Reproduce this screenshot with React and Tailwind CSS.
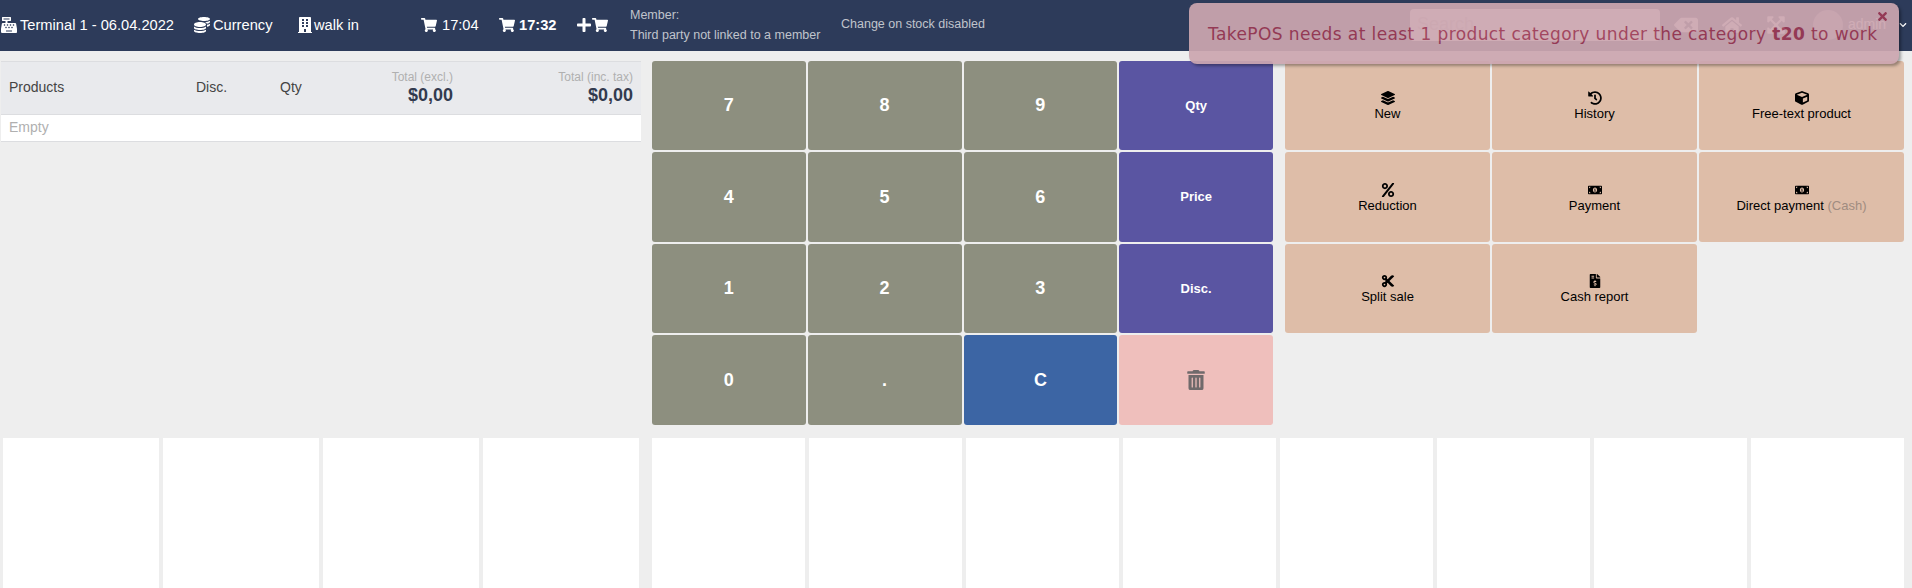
import React from "react";
import {
  FaCashRegister, FaCoins, FaBuilding, FaShoppingCart, FaPlus, FaLayerGroup, FaHistory, FaCube,
  FaPercent, FaMoneyBillAlt, FaCut, FaFileInvoiceDollar, FaTrashAlt, FaBackspace, FaHome,
  FaExpandArrowsAlt, FaTimes, FaChevronDown,
} from "react-icons/fa";

const numpad = [
  ["7", "n"], ["8", "n"], ["9", "n"], ["Qty", "q"],
  ["4", "n"], ["5", "n"], ["6", "n"], ["Price", "q"],
  ["1", "n"], ["2", "n"], ["3", "n"], ["Disc.", "q"],
  ["0", "n"], [".", "n"], ["C", "c"], ["", "d"],
];

const actions = [
  [FaLayerGroup, "New"],
  [FaHistory, "History"],
  [FaCube, "Free-text product"],
  [FaPercent, "Reduction"],
  [FaMoneyBillAlt, "Payment"],
  [FaMoneyBillAlt, "Direct payment", "(Cash)"],
  [FaCut, "Split sale"],
  [FaFileInvoiceDollar, "Cash report"],
];

function NumKey({ label, kind }) {
  if (kind === "d") {
    return (
      <div className="flex items-center justify-center rounded-[3px] bg-[#efbfbc] text-[#706a6b]">
        <FaTrashAlt className="text-[20px]" />
      </div>
    );
  }
  const cls =
    kind === "q"
      ? "bg-[#5a55a2] text-[13px]"
      : kind === "c"
      ? "bg-[#3c65a4] text-[18px]"
      : "bg-[#8d8f7f] text-[18px]";
  return (
    <div className={`flex items-center justify-center rounded-[3px] font-bold text-white ${cls}`}>{label}</div>
  );
}

export default function App() {
  return (
    <div className="relative h-[588px] w-[1912px] overflow-hidden bg-[#eeeeee] font-['Liberation_Sans',Arial,sans-serif] text-[14px]">
      <header className="flex h-[51px] items-center bg-[#2d3b5a] pb-[2px] text-[14.67px] text-white">
        <div className="flex w-[194px] items-center pl-[1px]">
          <FaCashRegister className="mr-[3px] text-[16px]" />
          <span>Terminal 1 - 06.04.2022</span>
        </div>
        <div className="flex w-[103px] items-center">
          <FaCoins className="mr-[3px] text-[16px]" />
          <span>Currency</span>
        </div>
        <div className="flex w-[124px] items-center">
          <FaBuilding className="mr-[1px] text-[16px]" />
          <span>walk in</span>
        </div>
        <div className="flex w-[78px] items-center">
          <FaShoppingCart className="mr-[5px] text-[16px]" />
          <span>17:04</span>
        </div>
        <div className="flex w-[77px] items-center font-bold">
          <FaShoppingCart className="mr-[4px] text-[16px]" />
          <span>17:32</span>
        </div>
        <div className="flex w-[54px] items-center">
          <FaPlus className="text-[16px]" />
          <FaShoppingCart className="text-[16px]" />
        </div>
        <div className="w-[211px] text-[12.5px] leading-[20px] text-[#c0c4cc]">
          <div>Member:</div>
          <div>Third party not linked to a member</div>
        </div>
        <div className="w-[569px] text-[12.5px] text-[#c0c4cc]">
          <div>Change on stock disabled</div>
        </div>
        <div className="flex h-[32px] w-[250px] items-center rounded-[4px] bg-white pl-[7px] text-[18px] text-[#ccc]">
          Search
        </div>
        <div className="ml-[4px] flex w-[44px] justify-center text-white">
          <FaBackspace className="text-[24px]" />
        </div>
        <div className="flex w-[48px] justify-center text-white">
          <FaHome className="text-[20px]" />
        </div>
        <div className="flex w-[40px] justify-center text-white">
          <FaExpandArrowsAlt className="text-[20px]" />
        </div>
        <div className="ml-[17px] flex items-center text-white">
          <div className="mr-[5px] h-[30px] w-[30px] rounded-full bg-white/50" />
          <span className="text-[14px]">admin</span>
          <FaChevronDown className="ml-[13px] text-[8px]" />
        </div>
      </header>

      <div className="flex h-[387px] pt-[10px]">
        <div className="ml-[1px] h-[81px] w-[640px]">
          <div className="flex h-[54px] items-center border-y border-[#dcdde0] bg-[#e9eaed] pl-[8px] pr-[8px] text-[#444]">
            <div className="w-[187px] pb-[2px]">Products</div>
            <div className="w-[84px] pb-[2px]">Disc.</div>
            <div className="w-[60px] pb-[2px]">Qty</div>
            <div className="w-[113px] text-right">
              <div className="text-[12px] leading-[15px] text-[#b0b0b0]">Total (excl.)</div>
              <div className="text-[18px] font-bold leading-[21px] text-[#333b4f]">$0,00</div>
            </div>
            <div className="flex-1 text-right">
              <div className="text-[12px] leading-[15px] text-[#b0b0b0]">Total (inc. tax)</div>
              <div className="text-[18px] font-bold leading-[21px] text-[#333b4f]">$0,00</div>
            </div>
          </div>
          <div className="flex h-[27px] items-center border-b border-[#dcdde0] bg-white pb-[2px] pl-[8px] text-[#b0b0b0]">
            Empty
          </div>
        </div>

        <div className="ml-[11px] grid h-[364px] w-[621px] grid-cols-4 grid-rows-[89px_90px_89px_90px] gap-[2px]">
          {numpad.map(([label, kind], i) => (
            <NumKey key={i} label={label} kind={kind} />
          ))}
        </div>

        <div className="ml-[12px] grid h-[364px] w-[619px] grid-cols-[205px_205px_205px] grid-rows-[89px_90px_89px_90px] gap-[2px]">
          {actions.map(([Icon, label, extra], i) => (
            <div
              key={i}
              className="flex flex-col items-center justify-center rounded-[3px] bg-[#debda8] pt-[1px] text-[13px] leading-[15px] text-black"
            >
              <Icon className="mb-[1px] text-[14px]" />
              <div>
                {label}
                {extra && <span className="text-[#a08c80]"> {extra}</span>}
              </div>
            </div>
          ))}
        </div>
      </div>

      <div className="flex h-[150px]">
        <div className="ml-[3px] grid w-[636px] grid-cols-4 gap-[4px]">
          {[0, 1, 2, 3].map((i) => (
            <div key={i} className="bg-white" />
          ))}
        </div>
        <div className="ml-[13px] grid w-[1252px] grid-cols-8 gap-[4px]">
          {[0, 1, 2, 3, 4, 5, 6, 7].map((i) => (
            <div key={i} className="bg-white" />
          ))}
        </div>
      </div>

      <div className="absolute left-[1189px] top-[3px] flex h-[61px] w-[710px] items-center rounded-[8px] bg-[#cca6b0] pt-[2px] pl-[19px] font-['DejaVu_Sans',sans-serif] text-[17px] tracking-[0.4px] text-[#9c3a55] opacity-[0.93] shadow-[2px_2px_3px_rgba(0,0,0,0.35)]">
        <span>
          TakePOS needs at least 1 product category under the category <b>t20</b> to work
        </span>
        <FaTimes className="absolute right-[10px] top-[7px] text-[13px]" />
      </div>
    </div>
  );
}
